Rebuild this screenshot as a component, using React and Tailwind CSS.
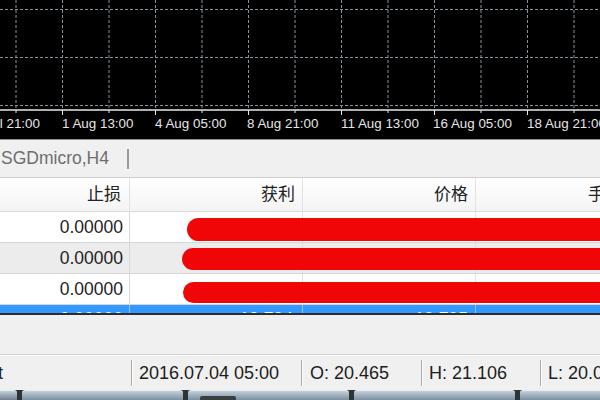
import React from 'react';

const vLines = [16, 62.5, 109, 155.5, 202, 248.5, 295, 341.5, 388, 434.5, 481, 527.5, 574];
const majorTicks = [62.5, 155.5, 248.5, 341.5, 434.5, 527.5];
const timeLabels = [
  { x: -33, t: '31 Jul 21:00' },
  { x: 62, t: '1 Aug 13:00' },
  { x: 155, t: '4 Aug 05:00' },
  { x: 247, t: '8 Aug 21:00' },
  { x: 341, t: '11 Aug 13:00' },
  { x: 433, t: '16 Aug 05:00' },
  { x: 527, t: '18 Aug 21:00' },
];

const rows = [
  { sl: '0.00000', bg: 'bg-white', bar: 'left-[187px] top-[6px] h-[23px]' },
  { sl: '0.00000', bg: 'bg-[#ececec]', bar: 'left-[182px] top-[5px] h-[22px]' },
  { sl: '0.00000', bg: 'bg-white', bar: 'left-[183px] top-[8px] h-[21px]' },
];

function Chart() {
  return (
    <div className="relative h-[139px] bg-black overflow-hidden">
      <svg width="600" height="139" className="absolute left-0 top-0">
        {vLines.map((x) => (
          <line key={x} x1={x} y1="0" x2={x} y2="108" stroke="#8593a0" strokeWidth="1" strokeDasharray="3 2" />
        ))}
        {[9.5, 57.5, 105.5].map((y) => (
          <line key={y} x1="0" y1={y} x2="600" y2={y} stroke="#8593a0" strokeWidth="1" strokeDasharray="3 2" />
        ))}
        <line x1="0" y1="110" x2="600" y2="110" stroke="#e8e8e8" strokeWidth="1.5" />
        {vLines.map((x) => (
          <line key={'t' + x} x1={x} y1="110" x2={x} y2={majorTicks.includes(x) ? 115 : 113} stroke="#e8e8e8" strokeWidth="1" />
        ))}
      </svg>
      {timeLabels.map((l) => (
        <span
          key={l.t}
          className="absolute top-[115px] text-[13.4px] leading-[18px] text-[#e6e6e6] whitespace-nowrap"
          style={{ left: l.x }}
        >
          {l.t}
        </span>
      ))}
    </div>
  );
}

function Taskbar() {
  return (
    <div className="h-[10px] bg-[#2e3338] flex gap-[5px] overflow-hidden">
      <div className="w-[17px] shrink-0 rounded-tr-[3px] bg-gradient-to-b from-[#c3d0dc] to-[#6f8091] border-t border-[#e5ecf2]" />
      {[0, 1, 2].map((i) => (
        <div key={i} className="relative w-[161px] shrink-0 rounded-t-[3px] bg-gradient-to-b from-[#c3d0dc] to-[#7d8fa0] border-t border-[#e5ecf2]">
          {i === 1 && <div className="absolute left-[12px] top-[5px] w-[36px] h-[5px] bg-[#3a3f44] rounded-t-[2px]" />}
        </div>
      ))}
      <div className="flex-1 rounded-tl-[3px] bg-gradient-to-b from-[#c3d0dc] to-[#7d8fa0] border-t border-[#e5ecf2]" />
    </div>
  );
}

function Sep() {
  return <div className="h-[26px] w-[2px] shrink-0 border-l border-[#a8a8a8] border-r border-r-white" />;
}

export default function App() {
  return (
    <div
      className="w-[600px] h-[400px] overflow-hidden flex flex-col bg-[#f0f0f0] text-[#1e1e1e]"
      style={{ fontFamily: '"Liberation Sans", "Noto Sans CJK SC", sans-serif' }}
    >
      <Chart />

      {/* tab strip */}
      <div className="h-[38px] border-t border-[#8c8c8c] bg-[#f0f0f0] flex items-center shrink-0">
        <div className="w-[127px] pl-[1px] text-[17.5px] text-[#6e6e6e] whitespace-nowrap">SGDmicro,H4</div>
        <div className="w-[2px] h-[20px] bg-[#9a9a9a]" />
      </div>

      {/* table */}
      <div className="border-t border-[#cfcfcf] bg-white shrink-0 overflow-hidden">
        <div className="h-[34px] flex bg-gradient-to-b from-white to-[#f4f4f4] border-b border-[#dadada] text-[17px] text-[#222]">
          <div className="w-[130px] shrink-0 flex items-center justify-end pr-[8px] border-r border-[#e2e2e2]">止损</div>
          <div className="w-[173px] shrink-0 flex items-center justify-end pr-[7px] border-r border-[#e2e2e2]">获利</div>
          <div className="w-[173px] shrink-0 flex items-center justify-end pr-[7px] border-r border-[#e2e2e2]">价格</div>
          <div className="w-[124px] shrink-0 flex items-center pl-[112px] whitespace-nowrap overflow-hidden">手数</div>
        </div>

        {rows.map((r, i) => (
          <div key={i} className={`relative h-[31px] flex border-b border-[#d6d6d6] text-[17.5px] ${r.bg}`}>
            <div className="w-[130px] shrink-0 flex items-center justify-end pr-[6px] border-r border-[#d8d8d8]">{r.sl}</div>
            <div className="w-[173px] shrink-0 border-r border-[#e2e2e2]" />
            <div className="w-[173px] shrink-0 border-r border-[#e2e2e2]" />
            <div className="flex-1" />
            <div className={`absolute right-[-20px] rounded-l-full bg-[#f00606] ${r.bar}`} />
          </div>
        ))}

        <div className="h-[10px] flex bg-[#3399ff] text-white text-[17.5px] leading-[20px] overflow-hidden border-b-2 border-[#2c2c2c]">
          <div className="w-[130px] shrink-0 flex justify-end pr-[6px] pt-[4px] border-r border-[#8cc2f5]">0.00000</div>
          <div className="w-[173px] shrink-0 flex justify-end pr-[9px] pt-[4px] border-r border-[#8cc2f5]">19.794</div>
          <div className="w-[173px] shrink-0 flex justify-end pr-[7px] pt-[4px] border-r border-[#8cc2f5]">19.795</div>
          <div className="flex-1" />
        </div>
      </div>

      {/* empty panel area */}
      <div className="flex-1 bg-[#f0f0f0] border-b border-[#d2d2d2]" />

      {/* status bar */}
      <div className="h-[35px] shrink-0 flex items-center border-t border-white bg-[#f0f0f0] text-[18px] text-[#1c1c1c] whitespace-nowrap">
        <div className="w-[131px] shrink-0 flex justify-start overflow-hidden">
          <span className="ml-[-54px]">Default</span>
        </div>
        <Sep />
        <div className="w-[168px] shrink-0 pl-[6px]">2016.07.04 05:00</div>
        <Sep />
        <div className="w-[118px] shrink-0 pl-[7px]">O: 20.465</div>
        <Sep />
        <div className="w-[117px] shrink-0 pl-[6px]">H: 21.106</div>
        <Sep />
        <div className="flex-1 pl-[6px]">L: 20.012</div>
      </div>

      <Taskbar />
    </div>
  );
}
